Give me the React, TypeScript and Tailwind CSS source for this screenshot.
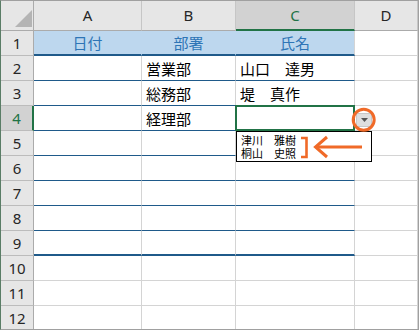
import React from 'react';

const BLUE = 'border-b-[#1f5a8a]';

interface RowDef {
  n: number;
  cells: string[];
  edge: 'head' | 'thin' | 'thick' | 'none';
}

const rows: RowDef[] = [
  { n: 1, cells: ['日付', '部署', '氏名', ''], edge: 'head' },
  { n: 2, cells: ['', '営業部', '山口　達男', ''], edge: 'thin' },
  { n: 3, cells: ['', '総務部', '堤　真作', ''], edge: 'thin' },
  { n: 4, cells: ['', '経理部', '', ''], edge: 'thin' },
  { n: 5, cells: ['', '', '', ''], edge: 'thin' },
  { n: 6, cells: ['', '', '', ''], edge: 'thin' },
  { n: 7, cells: ['', '', '', ''], edge: 'thin' },
  { n: 8, cells: ['', '', '', ''], edge: 'thin' },
  { n: 9, cells: ['', '', '', ''], edge: 'thick' },
  { n: 10, cells: ['', '', '', ''], edge: 'none' },
  { n: 11, cells: ['', '', '', ''], edge: 'none' },
  { n: 12, cells: ['', '', '', ''], edge: 'none' },
];

const colWidths = ['w-[108px]', 'w-[94px]', 'w-[119px]', 'w-[63px]'];
const letters = ['A', 'B', 'C', 'D'];

const jp = { fontFamily: '"Noto Sans CJK JP", sans-serif' };
const ui = { fontFamily: '"Noto Sans", "Noto Sans CJK JP", sans-serif' };

const ColumnHeader: React.FC = () => (
  <div className="flex h-[30px] shrink-0" style={ui}>
    <div className="w-[33px] shrink-0 bg-[#e6e6e6] border-r border-r-[#ababab] border-b border-b-[#ababab]">
      <svg width="33" height="29" viewBox="0 0 33 29">
        <polygon points="31,9 31,26 14,26" fill="#b4b4b4" />
      </svg>
    </div>
    {letters.map((l, i) => (
      <div
        key={l}
        className={`${colWidths[i]} shrink-0 flex items-center justify-center text-[15px] ${
          i === 2
            ? 'bg-[#d2d2d2] text-[#217346] border-b-2 border-b-[#217346]'
            : 'bg-[#e6e6e6] text-[#262626] border-b border-b-[#ababab]'
        } border-r border-r-[#c6c6c6]`}
      >
        {l}
      </div>
    ))}
  </div>
);

const Row: React.FC<{ row: RowDef }> = ({ row }) => {
  const selectedRow = row.n === 4;
  return (
    <div className="flex h-[25px] shrink-0">
      <div
        className={`w-[33px] shrink-0 flex items-center justify-center text-[15px] border-b border-b-[#bcbcbc] ${
          selectedRow
            ? 'bg-[#d2d2d2] text-[#217346] border-r-2 border-r-[#217346]'
            : 'bg-[#e6e6e6] text-[#262626] border-r border-r-[#ababab]'
        }`}
        style={ui}
      >
        {row.n}
      </div>
      {row.cells.map((c, i) => {
        const inTable = i < 3;
        let bottom = 'border-b border-b-[#d4d4d4]';
        if (inTable && row.edge === 'head') bottom = `border-b-2 ${BLUE}`;
        if (inTable && row.edge === 'thin') bottom = `border-b ${BLUE}`;
        if (inTable && row.edge === 'thick') bottom = `border-b-2 ${BLUE}`;
        const head = inTable && row.edge === 'head';
        const right = head && i < 2 ? 'border-r border-r-[#bdd7ee]' : 'border-r border-r-[#d4d4d4]';
        const active = row.n === 4 && i === 2;
        return (
          <div
            key={i}
            className={`${colWidths[i]} shrink-0 relative flex items-center ${bottom} ${right} ${
              head ? 'bg-[#bdd7ee] justify-center text-[#2e75b6]' : 'bg-white pl-[4px] text-black'
            } ${active ? 'z-10' : ''} text-[15px] leading-none`}
            style={jp}
          >
            {c}
            {active && (
              <>
                <div className="absolute -top-px -left-px w-[120px] h-[26px] border-2 border-[#217346]" />
                <div className="absolute top-[7px] left-[120px] w-[16px] h-[14px] bg-[#dedede] border border-[#c8c8c8] flex items-center justify-center">
                  <svg width="7" height="4" viewBox="0 0 7 4">
                    <polygon points="0,0 7,0 3.5,4" fill="#555" />
                  </svg>
                </div>
                <div className="absolute top-[25px] left-0 w-[136px] h-[31px] bg-white border border-black pl-[4px] pt-[2px] text-[11px] leading-[13px]">
                  <div>津川　雅樹</div>
                  <div>桐山　史照</div>
                </div>
              </>
            )}
          </div>
        );
      })}
    </div>
  );
};

const App: React.FC = () => {
  return (
    <div className="relative w-[420px] h-[330px] bg-white overflow-hidden">
      <div className="w-[419px] h-[330px] border border-[#a0a0a0] border-l-[#5a7d66] flex flex-col overflow-hidden">
        <ColumnHeader />
        {rows.map((r) => (
          <Row key={r.n} row={r} />
        ))}
      </div>
      <svg className="absolute inset-0 pointer-events-none z-20" width="420" height="330" viewBox="0 0 420 330">
        <circle cx="363.7" cy="119.7" r="10.5" fill="none" stroke="#f06a28" strokeWidth="3" />
        <polyline points="301,138 306.5,138 306.5,157 301,157" fill="none" stroke="#f06a28" strokeWidth="2.6" />
        <line x1="316" y1="147" x2="362" y2="147" stroke="#f06a28" strokeWidth="3" />
        <polyline points="327,137 315.5,147 327,157" fill="none" stroke="#f06a28" strokeWidth="3" />
      </svg>
    </div>
  );
};

export default App;
